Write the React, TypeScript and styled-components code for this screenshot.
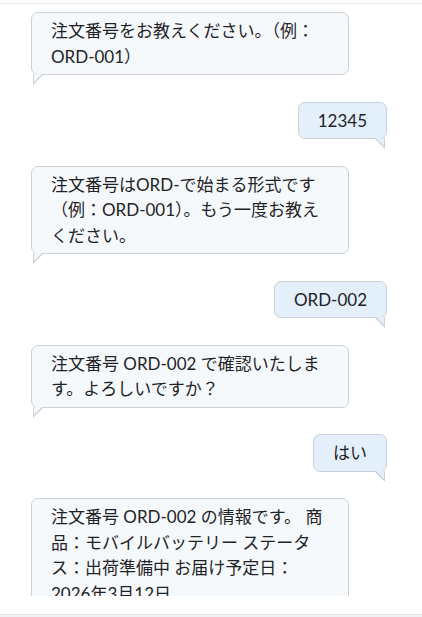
import { FC } from "react";
import styled, { createGlobalStyle } from "styled-components";

const GlobalStyle = createGlobalStyle`
  html, body {
    margin: 0;
    padding: 0;
    background: #ffffff;
  }
  body {
    font-family: "Lato", "Noto Sans CJK JP", sans-serif;
    color: #1f2328;
  }
  * {
    box-sizing: border-box;
  }
`;

const Frame = styled.div`
  width: 422px;
  height: 617px;
  display: flex;
  flex-direction: column;
  overflow: hidden;
  background: #ffffff;
`;

const TopEdge = styled.div`
  height: 4px;
  flex-shrink: 0;
  border-bottom: 1px solid #e6e8eb;
`;

const MessageList = styled.div`
  height: 592px;
  flex-shrink: 0;
  overflow: hidden;
  padding: 8px 35px 0 31px;
  display: flex;
  flex-direction: column;
  gap: 26.5px;
`;

const Row = styled.div<{ $mine?: boolean }>`
  display: flex;
  justify-content: ${({ $mine }) => ($mine ? "flex-end" : "flex-start")};
`;

const Bubble = styled.div<{ $mine?: boolean }>`
  position: relative;
  max-width: 318px;
  padding: 5px 19px;
  border: 1px solid #cdd2d8;
  border-radius: 7px;
  background: ${({ $mine }) => ($mine ? "#e3effb" : "#f6f9fc")};
  font-size: 17px;
  line-height: 1.5;
  word-break: normal;
  line-break: strict;

  &::before,
  &::after {
    content: "";
    position: absolute;
    width: 0;
    height: 0;
    top: 100%;
  }

  &::before {
    ${({ $mine }) => ($mine ? "right: 1px;" : "left: 1px;")}
    border-top: 11px solid #cdd2d8;
    ${({ $mine }) =>
      $mine
        ? "border-left: 11px solid transparent;"
        : "border-right: 11px solid transparent;"}
  }

  &::after {
    ${({ $mine }) => ($mine ? "right: 2px;" : "left: 2px;")}
    border-top: 8px solid ${({ $mine }) => ($mine ? "#e3effb" : "#f6f9fc")};
    ${({ $mine }) =>
      $mine
        ? "border-left: 8px solid transparent;"
        : "border-right: 8px solid transparent;"}
  }
`;

const Footer = styled.div`
  flex: 1;
  margin-top: 18px;
  border-top: 1px solid #e4e6e9;
  background: #f0f1f3;
`;

interface IMessage {
  mine?: boolean;
  text: string;
}

const messages: IMessage[] = [
  { text: "注文番号をお教えください。（例：ORD-001）" },
  { mine: true, text: "12345" },
  { text: "注文番号はORD-で始まる形式です（例：ORD-001）。もう一度お教えください。" },
  { mine: true, text: "ORD-002" },
  { text: "注文番号 ORD-002 で確認いたします。よろしいですか？" },
  { mine: true, text: "はい" },
  {
    text: "注文番号 ORD-002 の情報です。 商品：モバイルバッテリー ステータス：出荷準備中 お届け予定日：2026年3月12日",
  },
];

const App: FC = () => {
  return (
    <>
      <GlobalStyle />
      <Frame>
        <TopEdge />
        <MessageList>
          {messages.map((m, i) => (
            <Row key={i} $mine={m.mine}>
              <Bubble $mine={m.mine}>{m.text}</Bubble>
            </Row>
          ))}
        </MessageList>
        <Footer />
      </Frame>
    </>
  );
};

export default App;
